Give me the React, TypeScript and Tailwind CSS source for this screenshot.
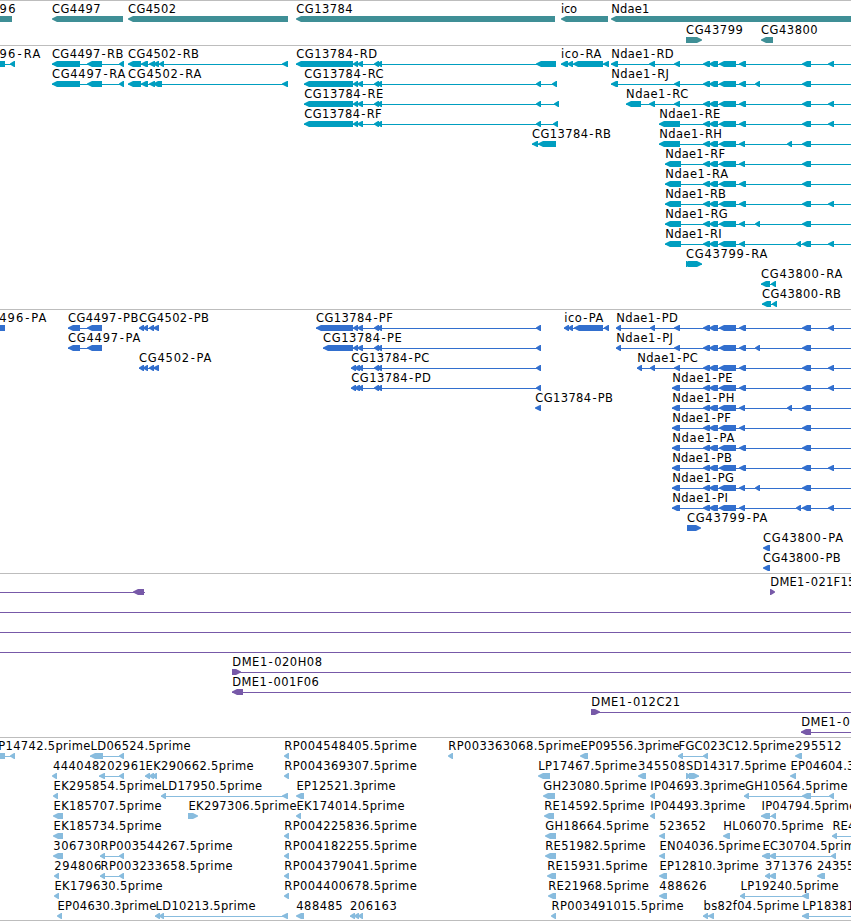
type Span = [number, number]

type Feature = {
  label?: string
  // left and right edge of the label
  at?: Span
  blocks?: Span[]
  line?: Span
  forward?: boolean
}

type Track = {
  name: string
  color: string
  className: string
  rowClass: string
  rows: Feature[][]
}

const END = 852

const f = (label: string, from: number, to: number, blocks: Span[], line?: Span, forward?: boolean): Feature => ({
  label,
  at: [from, to],
  blocks,
  line,
  forward,
})

// exons shared by the isoforms
const cgTail: Span[] = [[353, 358], [357, 363], [374, 379], [377, 382]]
const core: Span[] = [[703, 710], [709, 718], [719, 736]]
const wide: Span = [739, 746]
const slim: Span = [739, 745]
const mid: Span = [802, 811]
const last: Span = [828, 834]

const ndae = (name: string, from: number, to: number, head: Span[], tail: Span[]) =>
  f('Ndae1-' + name, from, to, [...head, ...core, ...tail], [head[0][0], END])

const genes: Feature[][] = [
  [
    f('96', 0, 15.3, [[-10, 12]]),
    f('CG4497', 52.3, 100.3, [[52, 123]]),
    f('CG4502', 128.5, 175.7, [[128, 288]]),
    f('CG13784', 296.7, 352.3, [[296, 555]]),
    f('ico', 561.5, 576.7, [[561, 608]]),
    f('Ndae1', 611.7, 649, [[611, 870]]),
  ],
  [
    f('CG43799', 686.5, 742.5, [[686, 702]], undefined, true),
    f('CG43800', 761.5, 817.3, [[761, 773]]),
  ],
]

const transcripts: Feature[][] = [
  [
    f('96-RA', 0, 40, [[-10, 5], [10, 15]]),
    f('CG4497-RB', 52.3, 123, [[52, 80], [87, 102], [119, 124]]),
    f('CG4502-RB', 128.5, 198.7, [[128, 141], [141, 148], [149, 155], [153, 159], [159, 164], [282, 288]]),
    f('CG13784-RD', 296.7, 376.7, [[296, 353], ...cgTail, [536, 556]]),
    f('ico-RA', 561.5, 601, [[561, 568], [567, 573], [573, 603], [603, 609]]),
    ndae('RD', 611.7, 673.3, [[611, 618], [649, 655], [674, 680]], [wide, mid, last]),
  ],
  [
    f('CG4497-RA', 52.3, 125, [[52, 80], [87, 102], [119, 124]]),
    f('CG4502-RA', 128.5, 201, [[128, 141], [141, 148], [149, 155], [153, 162], [282, 288]]),
    f('CG13784-RC', 304.7, 383.3, [[304, 353], ...cgTail, [536, 541], [552, 557]]),
    ndae('RJ', 611.7, 668.7, [[611, 618], [674, 680]], [wide, [755, 760], mid]),
  ],
  [
    f('CG13784-RE', 304.7, 383, [[304, 353], ...cgTail, [536, 541], [554, 559]]),
    ndae('RC', 626.5, 688, [[626, 641], [649, 655], [674, 680]], [wide, mid, last]),
  ],
  [
    f('CG13784-RF', 304.7, 381.3, [[304, 353], ...cgTail, [536, 541], [553, 558]]),
    ndae('RE', 659.7, 720, [[659, 680]], [wide, mid, last]),
  ],
  [
    f('CG13784-RB', 532.5, 610.7, [[532, 538], [538, 556]]),
    ndae('RH', 659.7, 721.7, [[659, 680]], [slim, [787, 792], mid]),
  ],
  [ndae('RF', 665.7, 724.7, [[665, 681]], [slim, mid])],
  [ndae('RA', 665.7, 727.7, [[665, 681]], [wide, mid])],
  [ndae('RB', 665.7, 725.7, [[665, 681]], [wide, mid, last])],
  [ndae('RG', 665.7, 727.3, [[665, 681]], [slim, [755, 760], mid])],
  [ndae('RI', 665.7, 721.3, [[665, 681]], [slim, [796, 801], mid, last])],
  [f('CG43799-RA', 686.5, 767, [[686, 691], [688, 702]], undefined, true)],
  [f('CG43800-RA', 761.5, 842, [[761, 770], [771, 776]])],
  [f('CG43800-RB', 762.5, 840.7, [[762, 771], [772, 777]])],
]

const cg4502p: Span[] = [[139, 144], [143, 148], [149, 154], [153, 159]]
const cg13784p: Span[] = [[351, 356], [354, 360], [358, 363], [374, 379], [377, 382], [536, 541]]

const proteins: Feature[][] = [
  [
    f('496-PA', -0.3, 46, [[-10, 5]]),
    f('CG4497-PB', 68.5, 138, [[68, 80], [87, 102]]),
    f('CG4502-PB', 139.5, 208.7, cg4502p),
    f('CG13784-PF', 316.5, 392.5, [[316, 353], ...cgTail, [536, 541]]),
    f('ico-PA', 564.7, 603, [[564, 569], [568, 573], [574, 603], [604, 609]]),
    ndae('PD', 616.7, 677.5, [[616, 621], [650, 655], [674, 680]], [wide, mid, last]),
  ],
  [
    f('CG4497-PA', 68.5, 140, [[68, 80], [87, 102]]),
    f('CG13784-PE', 323.5, 401.5, [[323, 353], ...cgTail, [536, 541]]),
    ndae('PJ', 616.7, 672.7, [[616, 621], [674, 680]], [wide, [755, 760], mid]),
  ],
  [
    f('CG4502-PA', 139.5, 211, cg4502p),
    f('CG13784-PC', 351.7, 429, cg13784p),
    ndae('PC', 637.7, 697.5, [[637, 642], [650, 655], [674, 680]], [wide, mid, last]),
  ],
  [
    f('CG13784-PD', 351.7, 430.5, cg13784p),
    ndae('PE', 672.7, 732.3, [[672, 680]], [wide, mid, last]),
  ],
  [
    f('CG13784-PB', 535.7, 612.7, [[535, 541]]),
    ndae('PH', 672.7, 734, [[672, 680]], [slim, [787, 792], mid]),
  ],
  [ndae('PF', 672.7, 730.5, [[672, 680]], [slim, mid])],
  [ndae('PA', 672.7, 734, [[672, 680]], [wide, mid])],
  [ndae('PB', 672.7, 731.5, [[672, 680]], [wide, mid, last])],
  [ndae('PG', 672.7, 733.7, [[672, 680]], [slim, [755, 760], mid])],
  [ndae('PI', 672.7, 727.7, [[672, 680]], [slim, [796, 801], mid, last])],
  [f('CG43799-PA', 687.3, 767, [[687, 701]], undefined, true)],
  [f('CG43800-PA', 763.5, 842.7, [[763, 770]])],
  [f('CG43800-PB', 763.5, 840.3, [[763, 770]])],
]

const clones: Feature[][] = [
  [{ line: [-1, 145], blocks: [[133, 144]] }, f('DME1-021F15', 770.7, 855, [[770, 775]], undefined, true)],
  [{ line: [-1, END] }],
  [{ line: [-1, END] }],
  [{ line: [-1, END] }],
  [f('DME1-020H08', 232.7, 321.7, [[232, 241]], [232, END], true)],
  [f('DME1-001F06', 232.7, 318.5, [[232, 243]], [232, END])],
  [f('DME1-012C21', 591.7, 679.7, [[591, 600]], [591, END], true)],
  [f('DME1-0', 801.7, 849.5, [[801, 811]], [801, END])],
]

const ests: Feature[][] = [
  [
    f('P14742.5prime', -1.3, 90, [[-10, 5], [10, 15]]),
    f('LD06524.5prime', 91, 190.3, [[90, 103], [119, 124]]),
    f('RP004548405.5prime', 284.7, 416.5, [[284, 289]]),
    f('RP003363068.5prime', 448.7, 580.3, [[448, 453]]),
    f('EP09556.3prime', 581, 679.3, [[580, 588]]),
    f('FGC023C12.5prime', 679, 794.3, [[678, 683], [703, 708]]),
    f('295512', 795.7, 841.3, [[795, 802]]),
  ],
  [
    f('444048', 53.3, 99, [[52, 57]]),
    f('202961', 99.7, 145.5, [[99, 105], [119, 124]]),
    f('EK290662.5prime', 146, 253.3, [[145, 150], [149, 154], [152, 157]]),
    f('RP004369307.5prime', 284.7, 416.5, [[284, 289]]),
    f('LP17467.5prime', 538.7, 636.7, [[538, 550]]),
    f('345508', 638.5, 685, [[638, 646]]),
    f('SD14317.5prime', 686.3, 786, [[686, 691], [689, 699]], undefined, true),
    f('EP04604.3prime', 790.9, 889, [[790, 796]]),
  ],
  [
    f('EK295854.5prime', 54, 161.3, [[53, 58]]),
    f('LD17950.5prime', 162, 261.7, [[161, 166], [282, 288]]),
    f('EP12521.3prime', 296.9, 395.3, [[296, 304]]),
    f('GH23080.5prime', 543.7, 646.3, [[543, 555]]),
    f('IP04693.3prime', 650.7, 745, [[650, 655]]),
    f('GH10564.5prime', 745.3, 847.3, [[744, 749], [802, 811], [829, 834]]),
  ],
  [
    f('EK185707.5prime', 54, 161.3, [[53, 63]]),
    f('EK297306.5prime', 188.9, 296.3, [[188, 198]], undefined, true),
    f('EK174014.5prime', 296.9, 404.3, [[296, 301]]),
    f('RE14592.5prime', 544.7, 644.3, [[544, 554]]),
    f('IP04493.3prime', 650.7, 745, [[650, 655]]),
    f('IP04794.5prime', 761.9, 856, [[761, 770], [771, 776]]),
  ],
  [
    f('EK185734.5prime', 54, 161.3, [[53, 63]]),
    f('RP004225836.5prime', 284.7, 416.5, [[284, 289]]),
    f('GH18664.5prime', 545.7, 648.5, [[545, 556]]),
    f('523652', 659.7, 705.5, [[659, 665]]),
    f('HL06070.5prime', 723.7, 823.3, [[723, 730]]),
    f('RE4', 832.9, 855, [[832, 837]], [832, END]),
  ],
  [
    f('306730', 53.7, 99.7, [[53, 63]]),
    f('RP003544267.5prime', 100.9, 232.3, [[100, 105], [119, 124]]),
    f('RP004182255.5prime', 284.7, 416.5, [[284, 289]]),
    f('RE51982.5prime', 545.7, 645.3, [[545, 556]]),
    f('EN04036.5prime', 659.9, 760.3, [[659, 665]]),
    f('EC30704.5prime', 762.9, 862, [[762, 770], [769, 776], [831, 836]]),
  ],
  [
    f('294806', 54.7, 101, [[54, 59]]),
    f('RP003233658.5prime', 100.9, 232.3, [[100, 105], [119, 124]]),
    f('RP004379041.5prime', 284.7, 416.5, [[284, 289]]),
    f('RE15931.5prime', 547.7, 647.3, [[547, 556]]),
    f('EP12810.3prime', 659.9, 758.3, [[659, 667]]),
    f('371376', 765.5, 812, [[765, 770], [769, 776]]),
    f('24355', 817.3, 854, [[817, 825]]),
  ],
  [
    f('EK179630.5prime', 54.9, 162.3, [[54, 59]]),
    f('RP004400678.5prime', 284.7, 416.5, [[284, 289]]),
    f('RE21968.5prime', 548.7, 648.5, [[548, 556]]),
    f('488626', 659.7, 706.3, [[659, 667]]),
    f('LP19240.5prime', 740.9, 838.3, [[740, 745], [802, 809]]),
  ],
  [
    f('EP04630.3prime', 57.9, 156, [[57, 62]]),
    f('LD10213.5prime', 156, 255.3, [[155, 160], [159, 164], [282, 288]]),
    f('488485', 296.7, 342.3, [[296, 304]]),
    f('206163', 350.3, 396.5, [[350, 355], [354, 359], [358, 363]]),
    f('RP003491015.5prime', 551.9, 683.3, [[551, 556]]),
    f('bs82f04.5prime', 703.9, 798.7, [[703, 708], [708, 714]]),
    f('LP18381.5prime', 802.7, 900.5, [[802, 809]], [802, END]),
  ],
]

const tracks: Track[] = [
  { name: 'Genes', color: '#3f8f96', className: 'h-[45px]', rowClass: 'h-[21px]', rows: genes },
  { name: 'Transcripts', color: '#009ec0', className: 'h-[264px]', rowClass: 'h-5', rows: transcripts },
  { name: 'Proteins', color: '#326fce', className: 'h-[264px]', rowClass: 'h-5', rows: proteins },
  { name: 'Clones', color: '#7759a8', className: 'h-[164px]', rowClass: 'h-5', rows: clones },
  { name: 'ESTs', color: '#88bcde', className: 'h-[183px]', rowClass: 'h-5', rows: ests },
]

const arrow = ([a, b]: Span, forward?: boolean) => {
  const head = Math.min(5, b - a - 1)
  return forward
    ? `${a},14 ${b - head},14 ${b},16.4 ${b},17.6 ${b - head},20 ${a},20`
    : `${b},14 ${a + head},14 ${a},16.4 ${a},17.6 ${a + head},20 ${b},20`
}

const FeatureGlyph = ({ feature, color }: { feature: Feature; color: string }) => {
  const { label, at, blocks = [], forward } = feature
  const line = feature.line ?? (blocks.length > 1 ? [blocks[0][0], blocks[blocks.length - 1][1]] : null)
  const [stem, suffix] = (label ?? '').split('-')

  return (
    <g fill={color}>
      {line && <rect x={line[0]} y={17} width={line[1] - line[0]} height={1} />}
      {blocks.map((block, i) => (
        <polygon key={i} points={arrow(block, forward)} />
      ))}
      {label && at && (
        <text x={at[0] - 0.4} y={11} textLength={at[1] - at[0] + 0.7} fill="#000">
          {stem}
          {suffix && (
            <>
              <tspan dx={0.9}>-</tspan>
              <tspan dx={0.9}>{suffix}</tspan>
            </>
          )}
        </text>
      )}
    </g>
  )
}

const App = () => {
  return (
    <main className="flex h-[921px] w-[851px] flex-col overflow-hidden bg-white">
      {tracks.map((track) => (
        <section
          key={track.name}
          aria-label={track.name}
          className={`${track.className} shrink-0 border-t border-[#bdbdbd] pt-px`}
        >
          {track.rows.map((row, i) => (
            <svg
              key={i}
              className={`${track.rowClass} block w-[851px] overflow-visible font-['DejaVu_Sans',sans-serif] text-[11.5px]`}
            >
              {row.map((feature, j) => (
                <FeatureGlyph key={j} feature={feature} color={track.color} />
              ))}
            </svg>
          ))}
        </section>
      ))}
      <div className="h-px shrink-0 bg-[#bdbdbd]" />
    </main>
  )
}

export default App
